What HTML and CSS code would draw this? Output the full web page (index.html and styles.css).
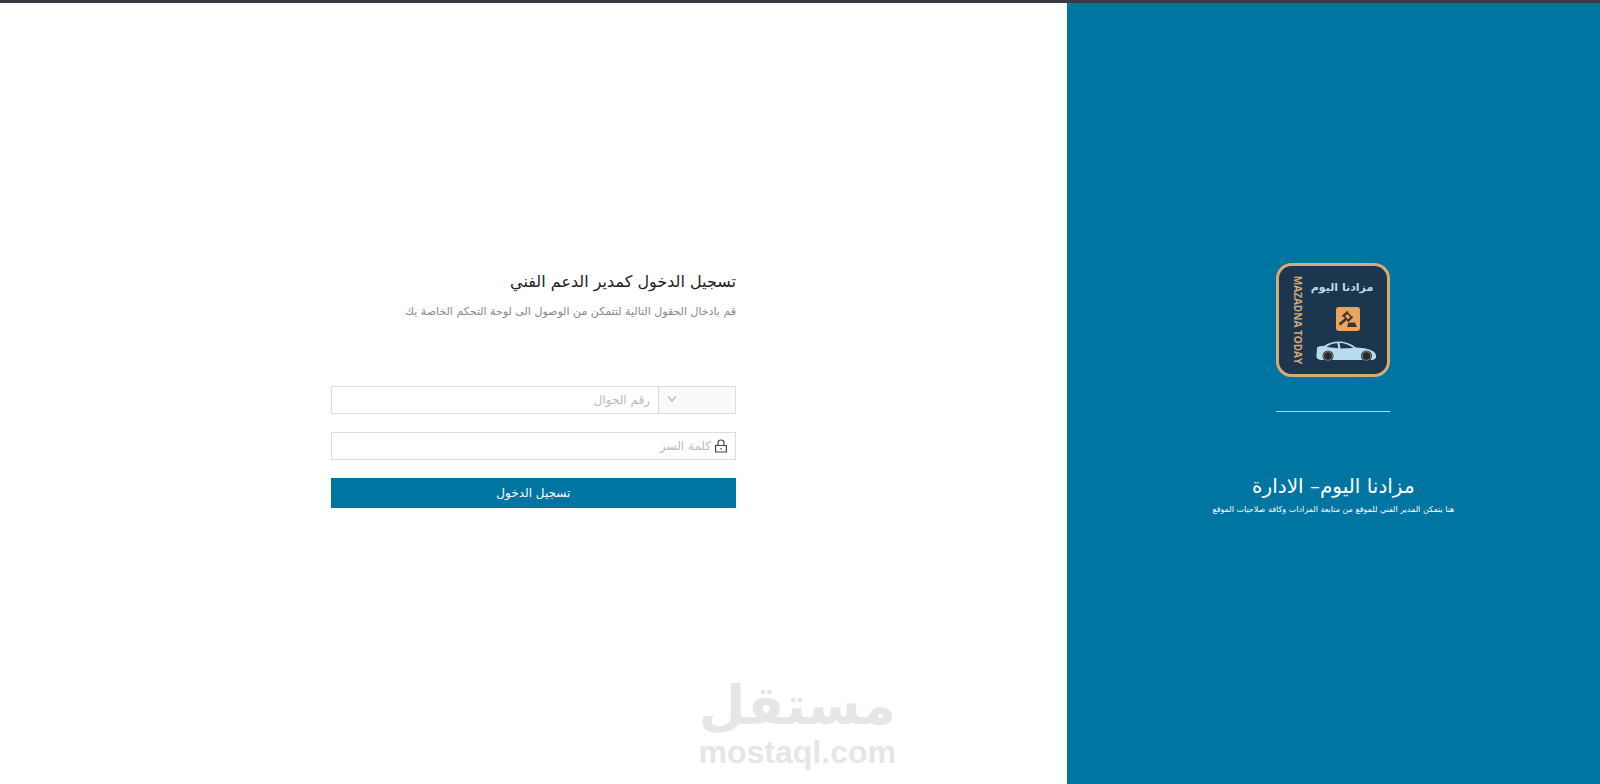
FILE: index.html
```html
<!DOCTYPE html>
<html lang="ar" dir="rtl">
<head>
<meta charset="UTF-8">
<meta name="viewport" content="width=device-width, initial-scale=1.0">
<title>تسجيل الدخول</title>
<link rel="stylesheet" href="styles.css">
</head>
<body>
<aside class="side">
  <svg class="logo" viewBox="0 0 114 114" role="img" aria-label="مزادنا اليوم">
    <rect x="1.5" y="1.5" width="111" height="111" rx="14" fill="#1c364e" stroke="#d5aa76" stroke-width="3"/>
    <text class="logo-ar" x="66" y="28" text-anchor="middle">مزادنا اليوم</text>
    <text class="logo-en" transform="translate(18 57) rotate(90)" text-anchor="middle">MAZADNA TODAY</text>
    <rect x="60" y="44" width="24" height="24" rx="3" fill="#eba45c"/>
    <!-- gavel -->
    <g stroke="#3a3530" fill="none">
      <path d="M63.500 61.500l7-6" stroke-width="2.600"/>
      <path d="M68 53l3.500-3 4 4.500-3.500 3z" stroke-width="1.400"/>
      <path d="M66.500 53.500l5.500-5M71.500 58.500l5-5" stroke-width="1.800"/>
    </g>
    <path d="M72.500 59.500h6.500l2 4.500h-10z" fill="#3a3530"/>
    <!-- car -->
    <path d="M41 84.500c1-1.500 4-1.500 7-1.500C52 80 57 78.500 63 78.500c7 0 12 2.500 17 6 8 .5 14 1.500 17.500 4 2 1.500 3 3.500 2.500 6.500l-3 2H45c-3-.5-5-1.500-4.500-5z" fill="#b9dcec"/>
    <path d="M50.500 84c3-2.500 6-3.800 11-3.800l.5 5zM63.500 80c5.500 0 10 2 14 5l-13 .5z" fill="#1c364e"/>
    <circle cx="52" cy="93" r="5.500" fill="#1c364e"/>
    <circle cx="52" cy="93" r="4.300" fill="#252a31" stroke="#8c8178" stroke-width="1"/>
    <circle cx="90.500" cy="93" r="5.500" fill="#1c364e"/>
    <circle cx="90.500" cy="93" r="4.300" fill="#252a31" stroke="#8c8178" stroke-width="1"/>
  </svg>
  <hr class="side-line">
  <h2 class="side-title">مزادنا اليوم– الادارة</h2>
  <p class="side-text">هنا يتمكن المدير الفني للموقع من متابعة المزادات وكافة صلاحيات الموقع</p>
</aside>

<main class="main">
  <form class="login">
    <h1 class="login-title">تسجيل الدخول كمدير الدعم الفني</h1>
    <p class="login-text">قم بادخال الحقول التالية لتتمكن من الوصول الى لوحة التحكم الخاصة بك</p>
    <div class="field">
      <div class="code">
        <select class="code-select" aria-label="رمز الدولة">
          <option value=""></option>
        </select>
        <svg class="arrow" viewBox="0 0 10 10"><path d="M1 2.500l4 4.500 4-4.500" fill="none" stroke="#bbb" stroke-width="1.300"/></svg>
      </div>
      <input class="input" type="tel" placeholder="رقم الجوال" aria-label="رقم الجوال">
    </div>
    <div class="field">
      <svg class="lock" viewBox="0 0 12 14">
        <path d="M.600 6.500h10.800v6.500H.600zM3 6.500V3.500Q3 1 6 1t3 2.500V6.500M6 9v1.500" fill="none" stroke="#444" stroke-width="1.200"/>
      </svg>
      <input class="input input-pass" type="password" placeholder="كلمة السر" aria-label="كلمة السر">
    </div>
    <button class="submit" type="submit">تسجيل الدخول</button>
  </form>
</main>

<div class="watermark">
  <span class="mark-ar">مستقل</span>
  <span class="mark-en">mostaql.com</span>
</div>
</body>
</html>
```

FILE: styles.css
```css
* {
  box-sizing: border-box;
}

body {
  margin: 0;
  min-height: 100vh;
  display: flex;
  border-top: 3px solid #363a42;
  background: #fff;
  font-family: "DejaVu Sans", sans-serif;
}

.side {
  flex: 1;
  display: flex;
  flex-direction: column;
  align-items: center;
  justify-content: center;
  padding-bottom: 6px;
  background: #0075a1;
  color: #fff;
}

.logo {
  width: 114px;
  height: 114px;
}

.logo-ar {
  font-size: 11px;
  font-weight: bold;
  fill: #b9dcec;
}

.logo-en {
  font-family: "Open Sans", sans-serif;
  font-size: 10px;
  font-weight: bold;
  fill: #d5aa76;
  direction: ltr;
}

.side-line {
  width: 114px;
  margin: 34px 0 58px;
  border: 0;
  border-top: 1px solid #a5dcf0;
}

.side-title {
  margin: 0;
  font-size: 20px;
  line-height: 32px;
  font-weight: normal;
}

.side-text {
  margin: 0;
  font-size: 8px;
  line-height: 16px;
}

.main {
  flex: 2;
  display: flex;
  align-items: center;
  justify-content: center;
  padding-bottom: 14px;
}

.login {
  width: 38%;
}

.login-title {
  margin: 0;
  font-size: 16px;
  line-height: 32px;
  font-weight: normal;
  color: #222;
}

.login-text {
  margin: 0 0 60px;
  font-size: 11px;
  line-height: 28px;
  color: #888;
}

.field {
  display: flex;
  align-items: center;
  height: 28px;
  margin-bottom: 18px;
  border: 1px solid #ddd;
}

.code {
  position: relative;
  width: 77px;
  height: 100%;
  border-left: 1px solid #ddd;
}

.code-select {
  width: 100%;
  height: 100%;
  border: 0;
  background: #fafafa;
  appearance: none;
}

.arrow {
  position: absolute;
  left: 8px;
  top: 7px;
  width: 10px;
  height: 10px;
  pointer-events: none;
}

.input {
  flex: 1;
  min-width: 0;
  height: 100%;
  padding: 0 8px;
  border: 0;
  background: none;
  direction: rtl;
  font-family: inherit;
  font-size: 12px;
}

.input::placeholder {
  color: #bbb;
}

.input-pass {
  padding: 0 4px;
}

.lock {
  width: 12px;
  height: 14px;
  margin-right: 8px;
}

.submit {
  display: block;
  width: 100%;
  height: 30px;
  border: 0;
  background: #0075a1;
  color: #fff;
  font-family: inherit;
  font-size: 12px;
}

.watermark {
  position: absolute;
  right: 44%;
  bottom: 16px;
  display: flex;
  flex-direction: column;
  align-items: center;
  color: #e6e6e6;
  font-weight: bold;
}

.mark-ar {
  font-size: 54px;
  line-height: 60px;
}

.mark-en {
  font-family: "Liberation Sans", sans-serif;
  font-size: 32px;
  line-height: 32px;
}
```
